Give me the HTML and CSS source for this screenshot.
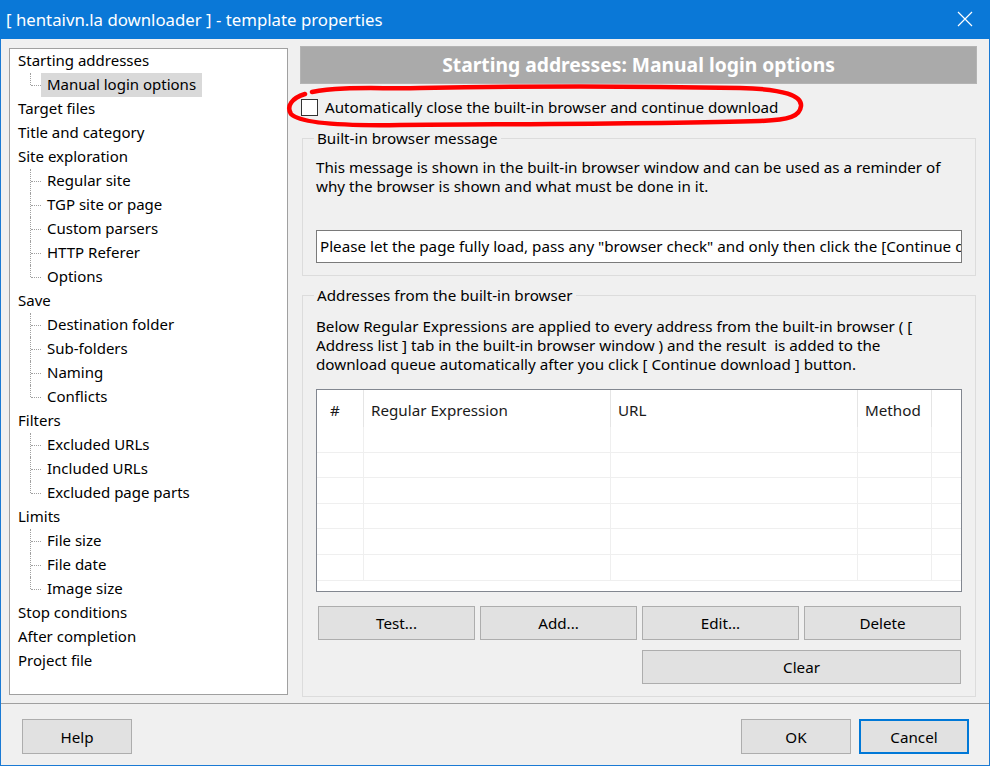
FILE: index.html
```html
<!DOCTYPE html>
<html lang="en">
<head>
    <meta charset="UTF-8">
    <title>template properties</title>
    <link rel="stylesheet" href="styles.css">
</head>
<body>
    <div class="window">
        <!-- Title bar -->
        <div class="titlebar">
            <span class="title">[ hentaivn.la downloader ] - template properties</span>
            <svg class="close" width="16" height="16" viewBox="0 0 16 16">
                <path d="M1 1 L15 15 M15 1 L1 15" stroke="#fff" stroke-width="1.2" fill="none"></path>
            </svg>
        </div>

        <div class="main">
            <!-- Settings tree -->
            <div class="tree">
                <div class="node">Starting addresses</div>
                <div class="leaf last"><span class="conn"></span><span class="label sel">Manual login options</span></div>
                <div class="node">Target files</div>
                <div class="node">Title and category</div>
                <div class="node">Site exploration</div>
                <div class="leaf"><span class="conn"></span><span class="label">Regular site</span></div>
                <div class="leaf"><span class="conn"></span><span class="label">TGP site or page</span></div>
                <div class="leaf"><span class="conn"></span><span class="label">Custom parsers</span></div>
                <div class="leaf"><span class="conn"></span><span class="label">HTTP Referer</span></div>
                <div class="leaf last"><span class="conn"></span><span class="label">Options</span></div>
                <div class="node">Save</div>
                <div class="leaf"><span class="conn"></span><span class="label">Destination folder</span></div>
                <div class="leaf"><span class="conn"></span><span class="label">Sub-folders</span></div>
                <div class="leaf"><span class="conn"></span><span class="label">Naming</span></div>
                <div class="leaf last"><span class="conn"></span><span class="label">Conflicts</span></div>
                <div class="node">Filters</div>
                <div class="leaf"><span class="conn"></span><span class="label">Excluded URLs</span></div>
                <div class="leaf"><span class="conn"></span><span class="label">Included URLs</span></div>
                <div class="leaf last"><span class="conn"></span><span class="label">Excluded page parts</span></div>
                <div class="node">Limits</div>
                <div class="leaf"><span class="conn"></span><span class="label">File size</span></div>
                <div class="leaf"><span class="conn"></span><span class="label">File date</span></div>
                <div class="leaf last"><span class="conn"></span><span class="label">Image size</span></div>
                <div class="node">Stop conditions</div>
                <div class="node">After completion</div>
                <div class="node">Project file</div>
            </div>

            <!-- Options pane -->
            <div class="pane">
                <div class="pane-head">Starting addresses: Manual login options</div>

                <div class="check"><span class="box"></span>Automatically close the built-in browser and continue download</div>

                <div class="group g1">
                    <div class="group-title">Built-in browser message</div>
                    <p class="desc">This message is shown in the built-in browser window and can be used as a reminder of<br>why the browser is shown and what must be done in it.</p>
                    <div class="input">Please let the page fully load, pass any "browser check" and only then click the [Continue download] button</div>
                </div>

                <div class="group g2">
                    <div class="group-title">Addresses from the built-in browser</div>
                    <p class="desc">Below Regular Expressions are applied to every address from the built-in browser ( [<br>Address list ] tab in the built-in browser window ) and the result&nbsp; is added to the<br>download queue automatically after you click [ Continue download ] button.</p>

                    <div class="list">
                        <table>
                            <colgroup>
                                <col class="c-num">
                                <col class="c-re">
                                <col class="c-url">
                                <col class="c-method">
                                <col>
                            </colgroup>
                            <thead>
                                <tr><th class="num">#</th><th>Regular Expression</th><th>URL</th><th>Method</th><th></th></tr>
                            </thead>
                            <tbody>
                                <tr><td></td><td></td><td></td><td></td><td></td></tr>
                                <tr><td></td><td></td><td></td><td></td><td></td></tr>
                                <tr><td></td><td></td><td></td><td></td><td></td></tr>
                                <tr><td></td><td></td><td></td><td></td><td></td></tr>
                                <tr><td></td><td></td><td></td><td></td><td></td></tr>
                                <tr><td></td><td></td><td></td><td></td><td></td></tr>
                            </tbody>
                        </table>
                    </div>

                    <div class="actions">
                        <button class="btn">Test...</button>
                        <button class="btn">Add...</button>
                        <button class="btn">Edit...</button>
                        <button class="btn">Delete</button>
                        <button class="btn wide">Clear</button>
                    </div>
                </div>
            </div>
        </div>

        <!-- Dialog buttons -->
        <div class="footer">
            <button class="btn dlg">Help</button>
            <span class="spacer"></span>
            <button class="btn dlg">OK</button>
            <button class="btn dlg default">Cancel</button>
        </div>
    </div>

    <!-- Red marker drawn over the screenshot -->
    <svg class="marker" width="990" height="766" viewBox="0 0 990 766">
        <path d="M312 92 C 340 86 380 89 420 88 C 520 86 640 86 740 88 C 785 89 802 96 801 106 C 800 116 790 120 760 121 C 660 124 520 124 400 125 C 340 126 300 123 291 114 C 286 106 292 98 305 94"
              stroke="#ff0000" stroke-width="4.5" fill="none" stroke-linecap="round"></path>
    </svg>
</body>
</html>
```

FILE: styles.css
```css
body {
    margin: 0;
    background: #f0f0f0;
    font-family: "Noto Sans", "Open Sans", sans-serif;
    font-size: 15.2px;
    color: #000;
}

.window {
    width: 990px;
    height: 766px;
    box-sizing: border-box;
    border: 1px solid #1a7ad4;
    border-top: none;
    display: flex;
    flex-direction: column;
    background: #f0f0f0;
}

/* title bar */
.titlebar {
    height: 39px;
    flex: none;
    margin: 0 -1px;
    background: #0a78d7;
    color: #fff;
    display: flex;
    align-items: center;
    padding: 0 17px 0 6px;
}

.title {
    font-size: 16.8px;
    flex: 1;
    margin-top: -1px;
}

.close {
    display: block;
    margin-top: -2px;
}

.main {
    height: 664px;
    flex: none;
    display: flex;
    padding: 7px 13px 0 8px;
    box-sizing: border-box;
}

/* tree */
.tree {
    width: 279px;
    height: 647px;
    margin-top: 2px;
    box-sizing: border-box;
    border: 1px solid #a0a0a0;
    background: #fff;
    padding-left: 8px;
    flex: none;
    font-size: 15px;
}

.node {
    height: 24px;
    line-height: 23px;
}

.leaf {
    height: 24px;
    line-height: 23px;
    display: flex;
    margin-left: 12px;
}

.conn {
    width: 11px;
    position: relative;
    flex: none;
}

.conn::before {
    content: "";
    position: absolute;
    left: 0;
    top: 0;
    bottom: 0;
    border-left: 1px dotted #a0a0a0;
}

.last .conn::before {
    bottom: 12px;
}

.conn::after {
    content: "";
    position: absolute;
    left: 1px;
    width: 10px;
    top: 12px;
    border-top: 1px dotted #a0a0a0;
}

.label {
    padding: 0 6px;
}

.label.sel {
    background: #d9d9d9;
}

/* right pane */
.pane {
    width: 677px;
    margin-left: 12px;
    flex: none;
}

.pane-head {
    height: 38px;
    box-sizing: border-box;
    background: #aaaaaa;
    border: 1px solid #b4b4b4;
    color: #fff;
    font-weight: bold;
    font-size: 19.3px;
    text-align: center;
    line-height: 36px;
}

.check {
    margin-top: 14px;
    height: 18px;
    display: flex;
    align-items: center;
    padding-left: 1px;
}

.box {
    width: 15px;
    height: 15px;
    border: 1px solid #333;
    background: #fff;
    margin-right: 7px;
}

.group {
    border: 1px solid #dcdcdc;
    margin: 22px 1px 0 2px;
    padding: 0 13px 12px 13px;
}

.group.g2 {
    margin-top: 19px;
}

.group-title {
    width: fit-content;
    margin: -10px 0 0 -2px;
    padding: 0 3px;
    line-height: 19px;
    background: #f0f0f0;
}

.desc {
    margin: 10px 0 0 0;
    line-height: 19px;
    white-space: nowrap;
}

.g2 .desc {
    margin-top: 12px;
}

.input {
    margin-top: 34px;
    height: 33px;
    box-sizing: border-box;
    border: 1px solid #7a7a7a;
    background: #fff;
    line-height: 31px;
    padding-left: 3px;
    white-space: nowrap;
    overflow: hidden;
}

/* list view */
.list {
    margin-top: 15px;
    height: 203px;
    box-sizing: border-box;
    border: 1px solid #828790;
    background: #fff;
    overflow: hidden;
}

.list table {
    width: 644px;
    table-layout: fixed;
    border-collapse: separate;
    border-spacing: 0;
}

.c-num { width: 47px; }
.c-re { width: 247px; }
.c-url { width: 247px; }
.c-method { width: 74px; }

.list th {
    height: 37px;
    box-sizing: border-box;
    font-weight: normal;
    text-align: left;
    padding: 3px 0 0 7px;
    border-right: 1px solid #e5e5e5;
    color: #1a1a1a;
}

.list th.num {
    padding-left: 13px;
}

.list th:last-child,
.list td:last-child {
    border-right: none;
}

.list td {
    height: 25.6px;
    box-sizing: border-box;
    padding: 0;
    border-right: 1px solid #efefef;
    border-bottom: 1px solid #efefef;
}

/* buttons */
.btn {
    font-family: inherit;
    font-size: 15.2px;
    color: #000;
    background: #e1e1e1;
    border: 1px solid #adadad;
    padding: 0;
    margin: 0;
    height: 34px;
}

.actions {
    margin: 14px 0 0 2px;
    display: grid;
    grid-template-columns: repeat(4, 157px);
    column-gap: 5px;
    row-gap: 10px;
}

.btn.wide {
    grid-column: 3 / 5;
}

.footer {
    flex: 1;
    border-top: 1px solid #a0a0a0;
    display: flex;
    align-items: flex-start;
    padding: 15px 20px 0 21px;
}

.spacer {
    flex: 1;
}

.btn.dlg {
    width: 110px;
    height: 35px;
}

.btn.dlg + .btn.dlg {
    margin-left: 8px;
}

.btn.default {
    border-color: #0078d7;
    box-shadow: inset 0 0 0 1px #0078d7;
}

.marker {
    position: absolute;
    left: 0;
    top: 0;
    pointer-events: none;
}
```
